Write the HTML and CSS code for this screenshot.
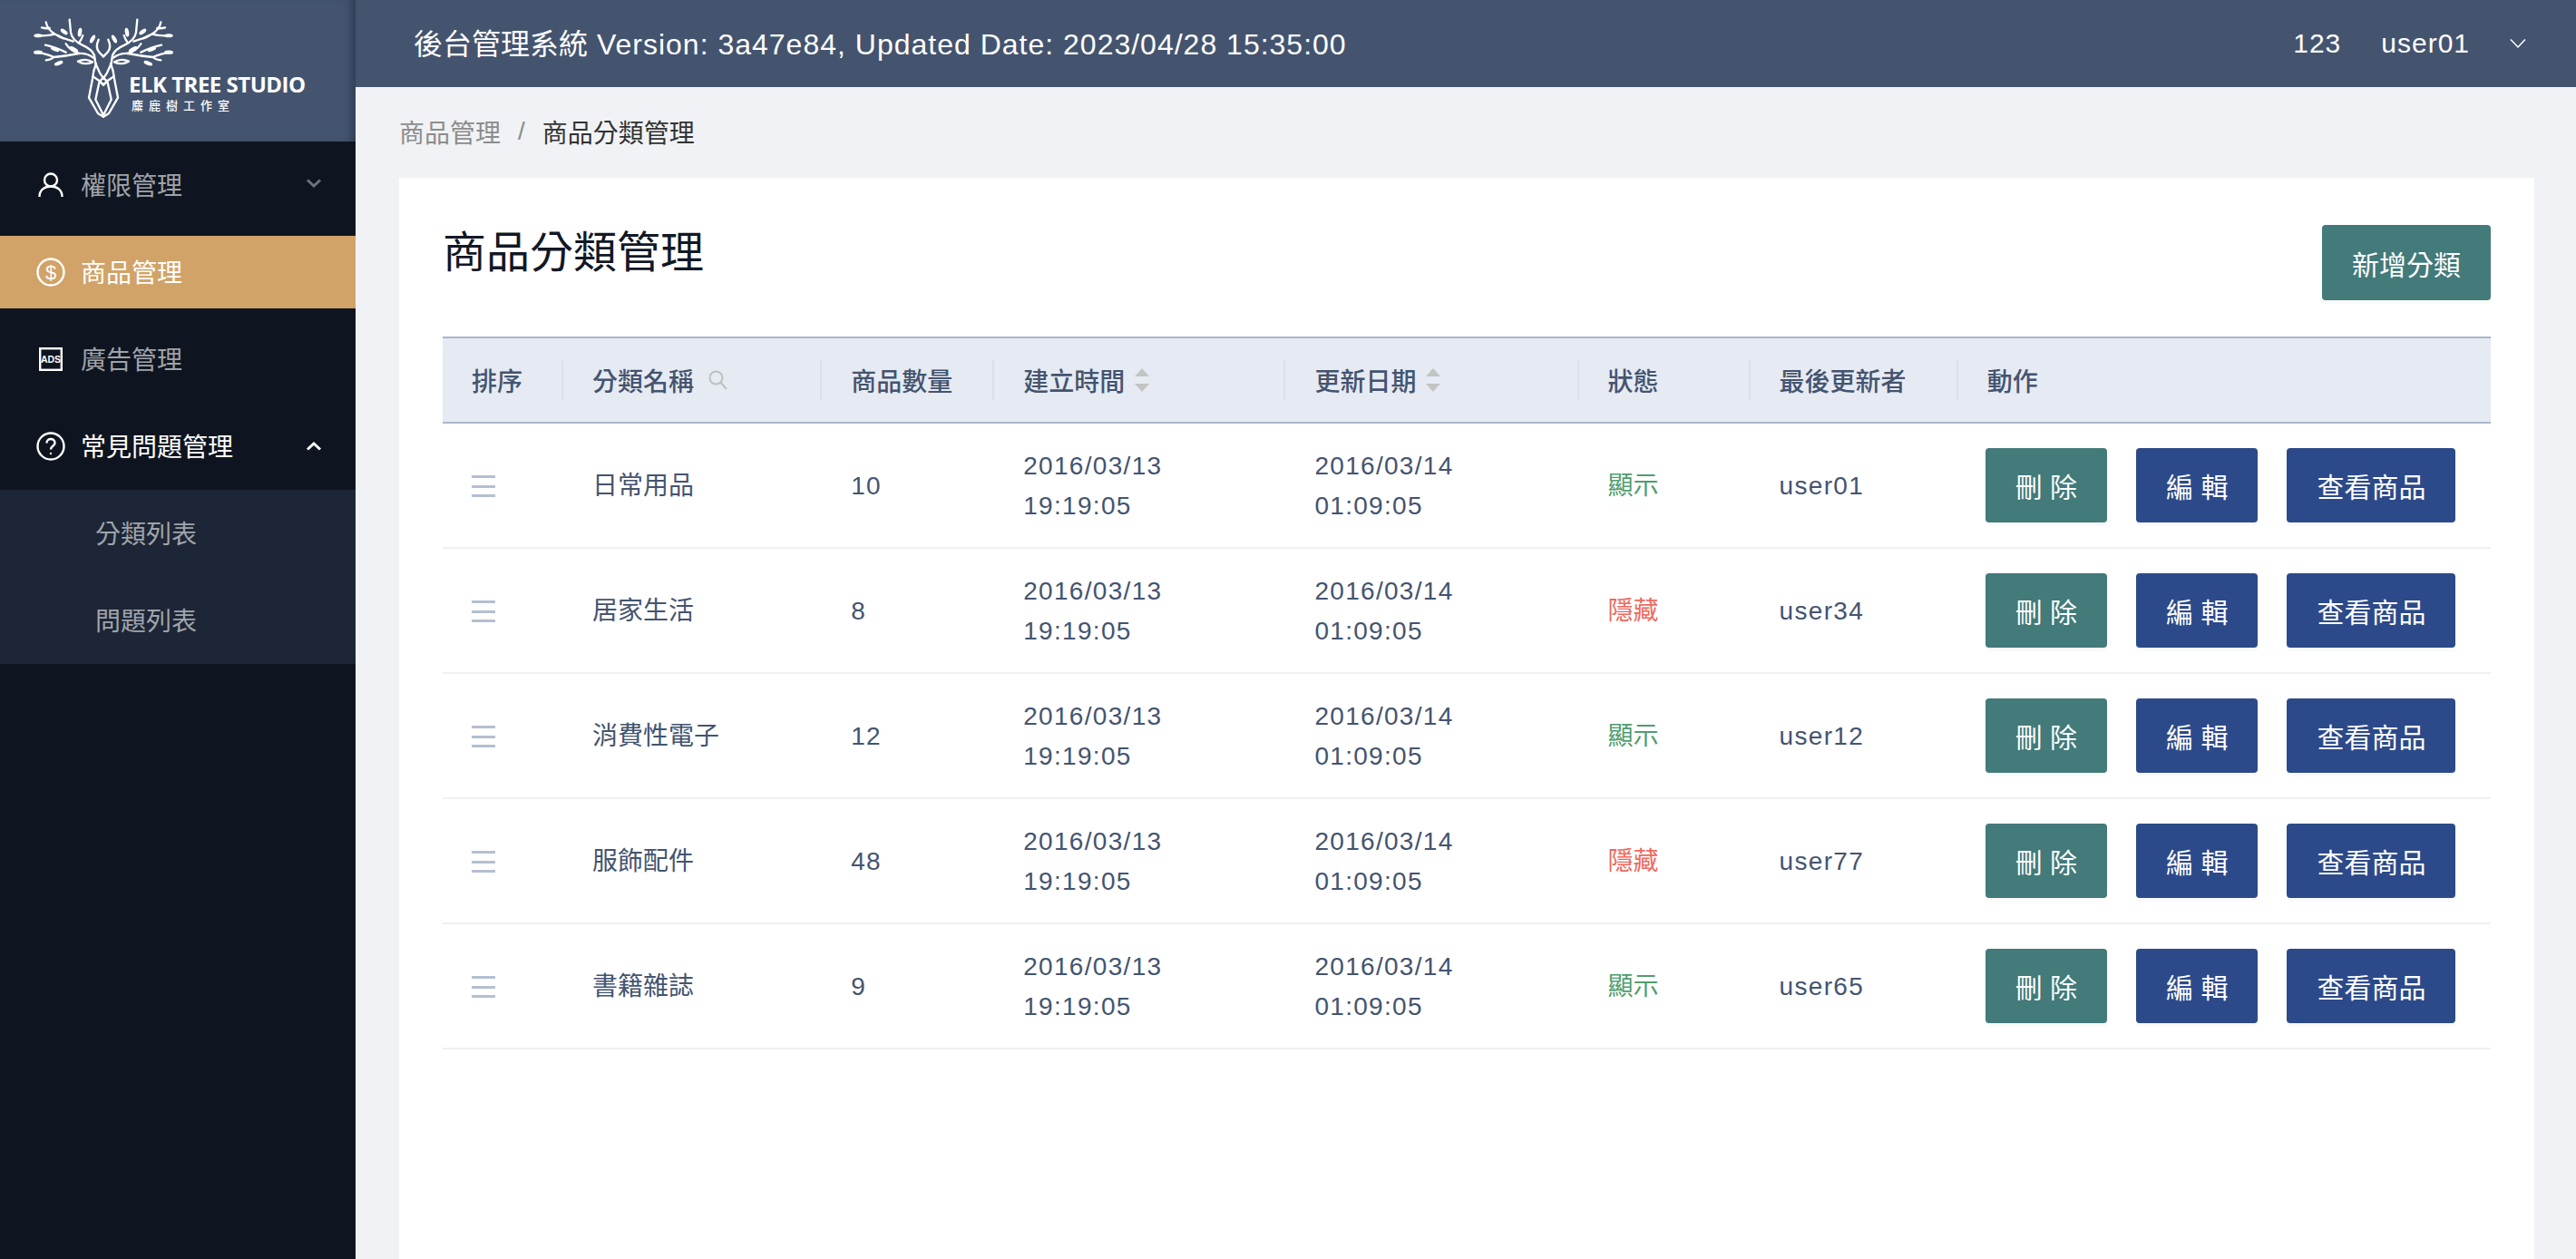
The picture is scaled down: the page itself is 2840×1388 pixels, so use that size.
FILE: index.html
```html
<!DOCTYPE html>
<html lang="zh-Hant">
<head>
    <meta charset="UTF-8">
    <title>商品分類管理</title>
    <link rel="stylesheet" href="styles.css">
</head>
<body>
    <div class="layout">
        <aside class="sidebar">
            <div class="logo">
                <svg class="elk" viewBox="0 0 510 360" width="170" height="120" fill="none" stroke="#fff" stroke-width="7" stroke-linecap="round" stroke-linejoin="round">
                    <defs>
                        <g id="elk-half">
                            <path d="M140 20 L144 62 Q148 88 182 104 Q214 118 222 138 L226 165 L240 196 L252 214"/>
                            <path d="M62 28 Q66 52 92 68 Q122 84 152 92"/>
                            <path d="M92 68 Q60 76 34 72"/>
                            <path d="M74 48 Q60 50 48 46"/>
                            <path d="M172 95 Q180 85 184 72"/>
                            <path d="M120 82 Q108 78 100 72"/>
                            <path d="M28 128 Q62 132 88 144 Q130 140 170 132 Q200 130 222 148"/>
                            <path d="M88 144 Q80 152 62 154"/>
                            <path d="M128 100 Q145 125 172 132"/>
                            <path d="M60 104 Q90 110 128 128"/>
                            <path d="M168 158 Q192 146 216 160 Q192 172 168 158 Z"/>
                            <path d="M228 165 Q218 190 216 215 L204 278 L234 330 L252 341"/>
                            <path d="M218 208 L238 222 L252 236"/>
                            <path d="M238 228 L226 284 L252 336"/>
                            <path d="M236 86 Q224 112 238 128 L252 142"/>
                            <g fill="#fff" stroke="none">
                                <ellipse cx="122" cy="60" rx="14" ry="6.500" transform="rotate(38 122 60)"/>
                                <ellipse cx="174" cy="62" rx="15" ry="6.500" transform="rotate(-80 174 62)"/>
                                <ellipse cx="216" cy="84" rx="15" ry="6.500" transform="rotate(-62 216 84)"/>
                                <ellipse cx="36" cy="73" rx="14" ry="6"/>
                                <ellipse cx="36" cy="128" rx="15" ry="6.500"/>
                                <ellipse cx="92" cy="118" rx="15" ry="6.500" transform="rotate(20 92 118)"/>
                                <ellipse cx="154" cy="118" rx="16" ry="6.500" transform="rotate(28 154 118)"/>
                                <ellipse cx="104" cy="164" rx="15" ry="6.500" transform="rotate(-20 104 164)"/>
                            </g>
                        </g>
                    </defs>
                    <use href="#elk-half"/>
                    <use href="#elk-half" transform="translate(504 0) scale(-1 1)"/>
                    <path d="M252 212 L264 224 L252 236 L240 224 Z"/>
                </svg>
                <div class="logo-text">
                    <div class="logo-en">ELK TREE STUDIO</div>
                    <div class="logo-zh">麋鹿樹工作室</div>
                </div>
            </div>
            <nav class="menu">
                <div class="menu-item">
                    <svg class="menu-icon" viewBox="0 0 32 32" fill="none" stroke="#fff" stroke-width="2.400"><circle cx="16" cy="10.500" r="7"/><path d="M3.500 29 C3.500 21.500 9 17.500 16 17.500 S28.500 21.500 28.500 29"/></svg>
                    <span class="menu-label">權限管理</span>
                    <svg class="menu-arrow" viewBox="0 0 18 12" fill="none" stroke="#6e7279" stroke-width="3"><path d="M2 2.500 L9 9 L16 2.500"/></svg>
                </div>
                <div class="menu-item active">
                    <svg class="menu-icon" viewBox="0 0 32 32" fill="none" stroke="#fff" stroke-width="2.400"><circle cx="16" cy="16" r="14.500"/><text x="16" y="23.500" class="icon-dollar">$</text></svg>
                    <span class="menu-label">商品管理</span>
                </div>
                <div class="menu-item">
                    <svg class="menu-icon" viewBox="0 0 32 32" fill="none" stroke="#fff" stroke-width="2.400"><rect x="4.200" y="4.200" width="23.600" height="23.600"/><text x="16" y="20" class="icon-ads">ADS</text></svg>
                    <span class="menu-label">廣告管理</span>
                </div>
                <div class="menu-item open">
                    <svg class="menu-icon" viewBox="0 0 32 32" fill="none" stroke="#fff" stroke-width="2.400"><circle cx="16" cy="16" r="14.500"/><path d="M11.500 12.500 C11.500 6.500 20.500 6.500 20.500 12.500 C20.500 15.500 16 15.500 16 19.500"/><circle cx="16" cy="24" r="1.200" fill="#fff" stroke="none"/></svg>
                    <span class="menu-label">常見問題管理</span>
                    <svg class="menu-arrow" viewBox="0 0 18 12" fill="none" stroke="#fff" stroke-width="3"><path d="M2 9.500 L9 3 L16 9.500"/></svg>
                </div>
                <div class="submenu">
                    <div class="submenu-item"><span class="menu-label">分類列表</span></div>
                    <div class="submenu-item"><span class="menu-label">問題列表</span></div>
                </div>
            </nav>
        </aside>

        <div class="main">
            <header class="topbar">
                <div class="topbar-title"><span class="topbar-name">後台管理系統</span> Version: 3a47e84, Updated Date: 2023/04/28 15:35:00</div>
                <div class="topbar-user">
                    <span>123</span>
                    <span>user01</span>
                    <svg class="user-arrow" viewBox="0 0 18 12" fill="none" stroke="#fff" stroke-width="1.500"><path d="M1 1.500 L9 10 L17 1.500"/></svg>
                </div>
            </header>

            <div class="breadcrumb">
                <span class="crumb">商品管理</span>
                <span class="crumb-sep">/</span>
                <span class="crumb-current">商品分類管理</span>
            </div>

            <section class="card">
                <div class="card-head">
                    <h1>商品分類管理</h1>
                    <button class="btn btn-teal">新增分類</button>
                </div>
                <table class="list">
                    <colgroup>
                        <col class="c-sort"><col class="c-name"><col class="c-count"><col class="c-created"><col class="c-updated"><col class="c-status"><col class="c-editor"><col class="c-action">
                    </colgroup>
                    <thead>
                        <tr>
                            <th>排序</th>
                            <th><span class="th-inner">分類名稱<svg class="ico-search" viewBox="0 0 21 22" fill="none" stroke="#bfbfbf" stroke-width="2"><circle cx="8.500" cy="8.500" r="7"/><path d="M13.500 13.500 L20 21"/></svg></span></th>
                            <th>商品數量</th>
                            <th><span class="th-inner">建立時間<svg class="ico-sort" viewBox="0 0 16 26" fill="#c4c4c4"><path d="M8 0 L16 9 H0 Z"/><path d="M0 17 H16 L8 26 Z"/></svg></span></th>
                            <th><span class="th-inner">更新日期<svg class="ico-sort" viewBox="0 0 16 26" fill="#c4c4c4"><path d="M8 0 L16 9 H0 Z"/><path d="M0 17 H16 L8 26 Z"/></svg></span></th>
                            <th>狀態</th>
                            <th>最後更新者</th>
                            <th>動作</th>
                        </tr>
                    </thead>
                    <tbody>
                        <tr>
                            <td><span class="drag"></span></td>
                            <td>日常用品</td>
                            <td class="num">10</td>
                            <td class="num">2016/03/13<br>19:19:05</td>
                            <td class="num">2016/03/14<br>01:09:05</td>
                            <td class="st-show">顯示</td>
                            <td class="num">user01</td>
                            <td><div class="actions"><button class="btn btn-teal">刪 除</button><button class="btn btn-navy">編 輯</button><button class="btn btn-navy">查看商品</button></div></td>
                        </tr>
                        <tr>
                            <td><span class="drag"></span></td>
                            <td>居家生活</td>
                            <td class="num">8</td>
                            <td class="num">2016/03/13<br>19:19:05</td>
                            <td class="num">2016/03/14<br>01:09:05</td>
                            <td class="st-hide">隱藏</td>
                            <td class="num">user34</td>
                            <td><div class="actions"><button class="btn btn-teal">刪 除</button><button class="btn btn-navy">編 輯</button><button class="btn btn-navy">查看商品</button></div></td>
                        </tr>
                        <tr>
                            <td><span class="drag"></span></td>
                            <td>消費性電子</td>
                            <td class="num">12</td>
                            <td class="num">2016/03/13<br>19:19:05</td>
                            <td class="num">2016/03/14<br>01:09:05</td>
                            <td class="st-show">顯示</td>
                            <td class="num">user12</td>
                            <td><div class="actions"><button class="btn btn-teal">刪 除</button><button class="btn btn-navy">編 輯</button><button class="btn btn-navy">查看商品</button></div></td>
                        </tr>
                        <tr>
                            <td><span class="drag"></span></td>
                            <td>服飾配件</td>
                            <td class="num">48</td>
                            <td class="num">2016/03/13<br>19:19:05</td>
                            <td class="num">2016/03/14<br>01:09:05</td>
                            <td class="st-hide">隱藏</td>
                            <td class="num">user77</td>
                            <td><div class="actions"><button class="btn btn-teal">刪 除</button><button class="btn btn-navy">編 輯</button><button class="btn btn-navy">查看商品</button></div></td>
                        </tr>
                        <tr>
                            <td><span class="drag"></span></td>
                            <td>書籍雜誌</td>
                            <td class="num">9</td>
                            <td class="num">2016/03/13<br>19:19:05</td>
                            <td class="num">2016/03/14<br>01:09:05</td>
                            <td class="st-show">顯示</td>
                            <td class="num">user65</td>
                            <td><div class="actions"><button class="btn btn-teal">刪 除</button><button class="btn btn-navy">編 輯</button><button class="btn btn-navy">查看商品</button></div></td>
                        </tr>
                    </tbody>
                </table>
            </section>
        </div>
    </div>
</body>
</html>
```

FILE: styles.css
```css
* {
    box-sizing: border-box;
}
html, body {
    height: 100%;
}
body {
    margin: 0;
    font-family: "Liberation Sans", "Noto Sans CJK TC", sans-serif;
    font-size: 28px;
    color: #44546f;
    background-color: #f0f2f5;
    overflow: hidden;
}
.layout {
    display: flex;
    height: 100%;
}

/* sidebar */
.sidebar {
    width: 392px;
    flex-shrink: 0;
    background-color: #0f1520;
}
.logo {
    position: relative;
    height: 156px;
    padding: 15px 0 0 30px;
    background-color: #44546f;
    box-shadow: inset -10px 0 10px -6px rgba(20, 30, 50, 0.45);
}
.elk {
    display: block;
}
.logo-text {
    position: absolute;
    left: 142px;
    top: 78px;
    color: #fff;
}
.logo-en {
    font-family: "Open Sans", sans-serif;
    font-weight: 700;
    font-size: 24px;
    line-height: 30px;
    letter-spacing: -0.5px;
    white-space: nowrap;
}
.logo-zh {
    font-size: 13px;
    font-weight: 500;
    line-height: 18px;
    letter-spacing: 6px;
    padding-left: 3px;
    white-space: nowrap;
}
.menu {
    display: flex;
    flex-direction: column;
}
.menu-item {
    display: flex;
    align-items: center;
    height: 80px;
    margin: 8px 0;
    padding: 0 37px 0 40px;
    color: #a0a3a9;
}
.menu-item.active {
    background-color: #d1a368;
    color: #fff;
}
.menu-item.open {
    color: #fff;
}
.menu-icon {
    width: 32px;
    height: 32px;
    margin-right: 17px;
    flex-shrink: 0;
}
.menu-label {
    padding-bottom: 3px;
}
.menu-arrow {
    width: 18px;
    height: 12px;
    margin-left: auto;
    margin-bottom: 4px;
}
.menu-item.open .menu-arrow {
    margin-bottom: 0;
}
.icon-dollar {
    font-family: "Liberation Sans", sans-serif;
    font-size: 22px;
    text-anchor: middle;
    fill: #fff;
    stroke: none;
}
.icon-ads {
    font-family: "Liberation Sans", sans-serif;
    font-size: 10.5px;
    font-weight: 700;
    text-anchor: middle;
    fill: #fff;
    stroke: none;
}
.submenu {
    background-color: #1c2636;
}
.submenu-item {
    display: flex;
    align-items: center;
    height: 96px;
    padding-left: 105px;
    color: #a0a4ab;
}

/* main column */
.main {
    flex: 1;
    display: flex;
    flex-direction: column;
    min-width: 0;
}
.topbar {
    display: flex;
    justify-content: space-between;
    align-items: center;
    height: 96px;
    padding: 0 55px 0 64px;
    background-color: #44546f;
    color: #fff;
    font-size: 30px;
    letter-spacing: 1px;
    flex-shrink: 0;
}
.topbar-title {
    font-size: 32px;
    padding-bottom: 4px;
}
.topbar-name {
    letter-spacing: 0;
}
.topbar-user {
    display: flex;
    align-items: center;
    gap: 44px;
}
.user-arrow {
    width: 18px;
    height: 12px;
}
.breadcrumb {
    display: flex;
    align-items: center;
    gap: 19px;
    height: 98px;
    margin-bottom: 2px;
    padding-left: 48px;
    color: #8c8c8c;
    flex-shrink: 0;
}
.crumb-current {
    color: #333;
}
.card {
    flex: 1;
    margin: 0 46px 0 48px;
    padding: 52px 48px 0;
    background-color: #fff;
}
.card-head {
    display: flex;
    justify-content: space-between;
    align-items: flex-start;
    margin-bottom: 40px;
}
h1 {
    margin: 3px 0 0;
    font-size: 48px;
    font-weight: 400;
    line-height: 56px;
    color: #111826;
}

/* buttons */
.btn {
    height: 83px;
    padding: 0 33px;
    border: 0;
    border-radius: 4px;
    font-family: inherit;
    font-size: 30px;
    color: #fff;
    box-shadow: 0 4px 0 rgba(0, 0, 0, 0.02);
}
.btn-teal {
    background-color: #437a7a;
}
.btn-navy {
    background-color: #2c4a8a;
}
.actions {
    display: flex;
    gap: 32px;
    margin: 0 0 3px -2px;
}
.actions .btn {
    height: 82px;
}

/* table */
.list {
    width: 100%;
    table-layout: fixed;
    border-collapse: collapse;
}
.c-sort { width: 133px; }
.c-name { width: 285px; }
.c-count { width: 190px; }
.c-created { width: 321px; }
.c-updated { width: 323px; }
.c-status { width: 189px; }
.c-editor { width: 229px; }
.c-action { width: 587px; }
.list th {
    position: relative;
    height: 94px;
    padding: 0 32px;
    background-color: #e6eaf3;
    border-top: 2px solid #aab6cb;
    border-bottom: 2px solid #aab6cb;
    font-weight: 500;
    text-align: left;
    white-space: nowrap;
}
.list th + th::before {
    content: "";
    position: absolute;
    left: -2px;
    top: 24px;
    width: 2px;
    height: 44px;
    background-color: #dadfe8;
}
.th-inner {
    display: inline-flex;
    align-items: center;
}
.ico-search {
    width: 21px;
    height: 22px;
    margin-left: 16px;
}
.ico-sort {
    width: 16px;
    height: 26px;
    margin-left: 11px;
}
.list td {
    padding: 25px 32px 23px;
    line-height: 44px;
    border-bottom: 2px solid #f0f0f0;
    white-space: nowrap;
}
.num {
    letter-spacing: 1.3px;
}
.drag {
    display: block;
    width: 26px;
    height: 24px;
    border-top: 3px solid #b4bfd0;
    border-bottom: 3px solid #b4bfd0;
    position: relative;
}
.drag::after {
    content: "";
    position: absolute;
    left: 0;
    right: 0;
    top: 7.5px;
    height: 3px;
    background-color: #b4bfd0;
}
.st-show {
    color: #4f9d6e;
}
.st-hide {
    color: #ee6a5f;
}
```
